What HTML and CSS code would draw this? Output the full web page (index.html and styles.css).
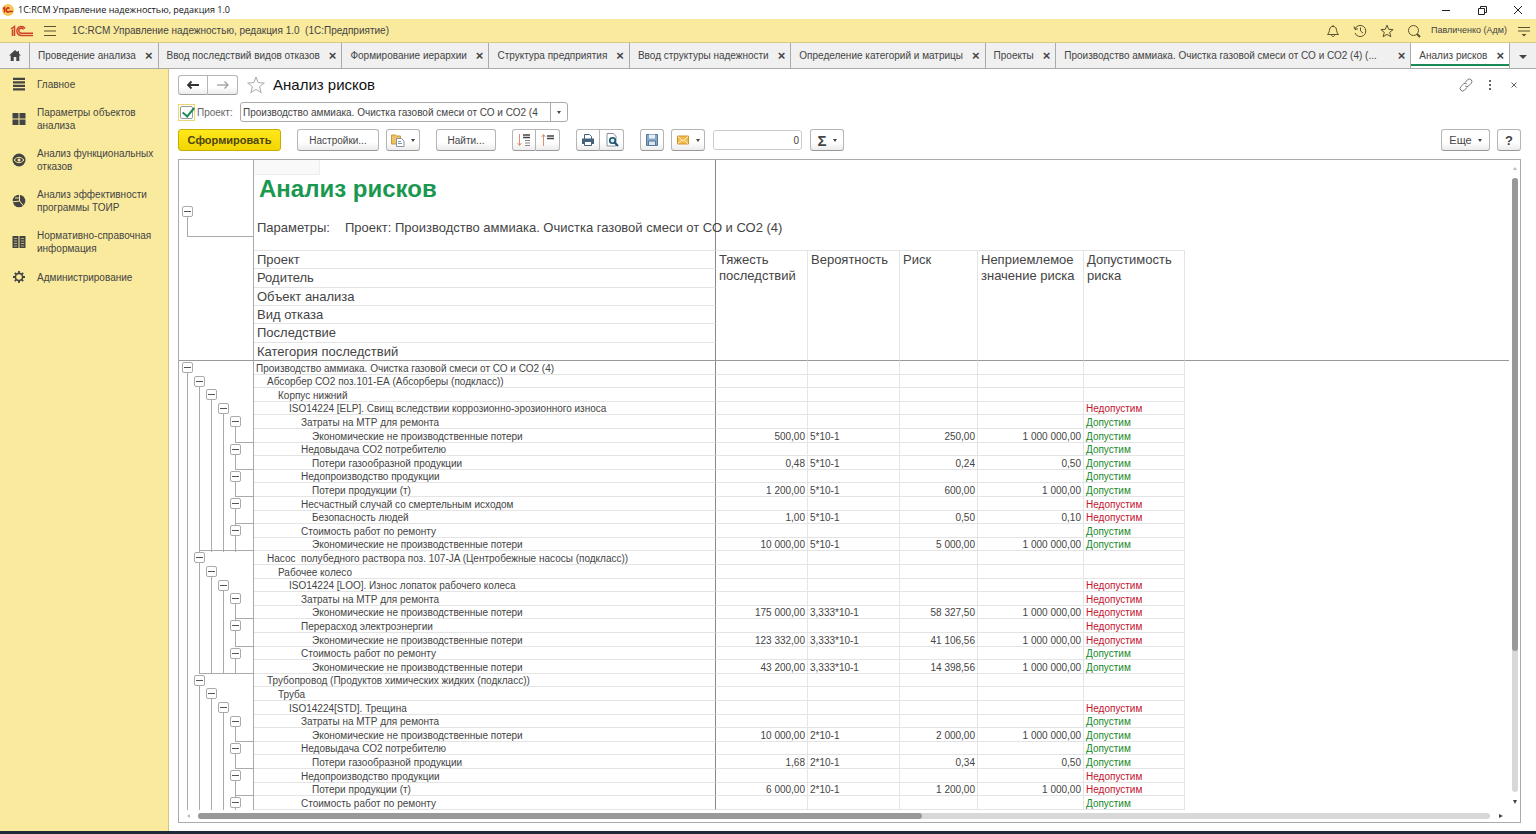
FILE: index.html
```html
<!DOCTYPE html>
<html lang="ru">
<head>
<meta charset="utf-8">
<title>1C:RCM Управление надежностью</title>
<link rel="stylesheet" href="styles.css">
</head>
<body>
<div class="app">
  <header class="titlebar">
    <svg class="app-icon" viewBox="0 0 12 12"><circle cx="6" cy="6" r="6" fill="#f7c95c"/><path d="M1 4.600l1.500-1v5M7.500 4.500a2 2 0 1 0 0 3H11" fill="none" stroke="#d0301c" stroke-width="1.500"/></svg>
    <span class="window-title">1C:RCM Управление надежностью, редакция 1.0</span>
    <div class="window-buttons">
      <button aria-label="Свернуть"><svg viewBox="0 0 12 12"><path d="M2 6.500h8"/></svg></button>
      <button aria-label="Восстановить"><svg viewBox="0 0 12 12"><path d="M2.500 4.500h6v6h-6zM4.500 4.500v-2h6v6h-2"/></svg></button>
      <button aria-label="Закрыть"><svg viewBox="0 0 12 12"><path d="M2 2l8 8M10 2l-8 8"/></svg></button>
    </div>
  </header>

  <div class="brandbar">
    <svg class="logo" viewBox="0 0 24 14"><path d="M1 5l3.500-2.500V12M2.500 5.500V12" /><path d="M15 4.500A4.500 4.500 0 1 0 11.500 11.500H23M13.500 5.500A2.500 2.500 0 1 0 11.500 9.200H23"/></svg>
    <button class="icon-btn" aria-label="Меню"><svg class="burger" viewBox="0 0 12 12"><path d="M0 1.500h12M0 6h12M0 10.500h12"/></svg></button>
    <span class="brand-title">1C:RCM Управление надежностью, редакция 1.0&nbsp; (1С:Предприятие)</span>
    <div class="brand-tools">
      <button class="icon-btn" aria-label="Уведомления"><svg viewBox="0 0 14 14"><path d="M1.500 10.500h11c-2-2-1.500-3-2.200-5.500C9.800 3 8.800 2.500 7 2.500S4.200 3 3.700 5C3 7.500 3.500 8.500 1.500 10.500zM5.500 11c0 2 3 2 3 0M7 2.500V1"/></svg></button>
      <button class="icon-btn" aria-label="История"><svg viewBox="0 0 14 14"><path d="M2 5a5.600 5.600 0 1 1 0 4M1 2.500l1 3 3-.7M7.500 3.500V7l2.500 2"/></svg></button>
      <button class="icon-btn" aria-label="Избранное"><svg viewBox="0 0 14 14"><path d="M7 1.200l1.700 4.100 4.400.3-3.400 2.800 1.100 4.300L7 10.400l-3.800 2.300 1.100-4.300L.9 5.600l4.400-.3z"/></svg></button>
      <button class="icon-btn" aria-label="Поиск"><svg viewBox="0 0 14 14"><circle cx="6.500" cy="6.500" r="5"/><path d="M10 10l3 3" stroke-width="2"/></svg></button>
      <span class="user">Павличенко (Адм)</span>
      <button class="icon-btn" aria-label="Настройки окна"><svg viewBox="0 0 14 14"><path d="M1 3.500h12M1 7h12"/><path d="M4.500 10h5L7 12.500z" fill="#5a5230" stroke="none"/></svg></button>
    </div>
  </div>

  <nav class="tabs">
    <a class="home" href="#" aria-label="Начальная страница"><svg viewBox="0 0 12 11"><path d="M6 0L0 5.500h1.700V11h3V7h2.600v4h3V5.500H12L10 3.700V1H8.500v1.300z" fill="#444"/></svg></a>
    <a class="tab" href="#"><span>Проведение анализа</span><b>×</b></a>
    <a class="tab" href="#"><span>Ввод последствий видов отказов</span><b>×</b></a>
    <a class="tab" href="#"><span>Формирование иерархии</span><b>×</b></a>
    <a class="tab" href="#"><span>Структура предприятия</span><b>×</b></a>
    <a class="tab" href="#"><span>Ввод структуры надежности</span><b>×</b></a>
    <a class="tab" href="#"><span>Определение категорий и матрицы</span><b>×</b></a>
    <a class="tab" href="#"><span>Проекты</span><b>×</b></a>
    <a class="tab wide" href="#"><span>Производство аммиака. Очистка газовой смеси от СО и СО2 (4) (...</span><b>×</b></a>
    <a class="tab active" href="#"><span>Анализ рисков</span><b>×</b></a>
    <button class="more-tabs" aria-label="Все вкладки"><i class="caret"></i></button>
  </nav>

  <div class="body">
    <aside class="sidebar">
      <a href="#"><svg viewBox="0 0 14 14"><path d="M1 1.800h12M1 5.300h12M1 8.800h12M1 12.300h12" stroke="#444" stroke-width="2.200"/></svg><span>Главное</span></a>
      <a href="#"><svg viewBox="0 0 14 14"><path d="M.5 1h6v5.500h-6zM7.500 1h6v5.500h-6zM.5 7.500h6V13h-6zM7.500 7.500h6V13h-6z" fill="#444"/></svg><span>Параметры объектов анализа</span></a>
      <a href="#"><svg viewBox="0 0 14 14"><circle cx="7" cy="7" r="6.500" fill="#444"/><path d="M2 7q5-5.500 10 0q-5 5.500-10 0z" fill="none" stroke="#f9ea9d"/><circle cx="7" cy="7" r="1.500" fill="#f9ea9d"/></svg><span>Анализ функциональных отказов</span></a>
      <a href="#"><svg viewBox="0 0 14 14"><circle cx="7" cy="7" r="6.300" fill="#444"/><path d="M7.500 0v7L0 8M7.500 7l4.500 5.500M3 4h4" stroke="#f9ea9d" fill="none"/></svg><span>Анализ эффективности программы ТОИР</span></a>
      <a href="#"><svg viewBox="0 0 14 14"><path d="M.5 1h6v12h-6zM7.500 1h6v12h-6z" fill="#444"/><path d="M2 3.500h3M2 6h3M2 8.500h3M2 11h3M9 3.500h3M9 6h3M9 8.500h3M9 11h3" stroke="#b5aa72"/></svg><span>Нормативно-справочная информация</span></a>
      <a href="#"><svg viewBox="0 0 14 14"><circle cx="7" cy="7" r="3.600" fill="none" stroke="#444" stroke-width="1.600"/><path d="M7 1v2.200M7 10.800V13M1 7h2.200M10.800 7H13M2.800 2.800l1.500 1.500M9.700 9.700l1.500 1.500M11.200 2.800L9.700 4.300M4.300 9.700l-1.500 1.500" stroke="#444" stroke-width="1.800"/></svg><span>Администрирование</span></a>
    </aside>

    <main class="main">
      <div class="page-head">
        <div class="group nav-group">
          <button class="btn" aria-label="Назад"><svg viewBox="0 0 14 10"><path d="M2 5h11M5.500 1.500L2 5l3.500 3.500" fill="none" stroke="#333" stroke-width="1.800"/></svg></button>
          <button class="btn" aria-label="Вперед"><svg viewBox="0 0 14 10"><path d="M1 5h11M8.500 1.500L12 5 8.500 8.500" fill="none" stroke="#aaa" stroke-width="1.500"/></svg></button>
        </div>
        <button class="icon-btn fav" aria-label="В избранное"><svg viewBox="0 0 18 18"><path d="M9 1l2.200 5.700 6.100.3-4.800 3.800 1.700 5.900L9 13.400l-5.200 3.300 1.700-5.900L.7 7l6.100-.3z" fill="none" stroke="#aaa"/></svg></button>
        <h1>Анализ рисков</h1>
        <div class="page-tools">
          <button class="icon-btn" aria-label="Ссылка"><svg viewBox="0 0 14 14"><path d="M6 4.500l2.500-2.700a2.500 2.500 0 0 1 3.700 3.500L9.500 8a2.400 2.400 0 0 1-3.200.2M8 9.500l-2.500 2.700a2.500 2.500 0 0 1-3.700-3.500L4.500 6a2.400 2.400 0 0 1 3.200-.2" fill="none" stroke="#777"/></svg></button>
          <button class="icon-btn" aria-label="Еще"><svg viewBox="0 0 14 14"><path d="M6 2h2v2H6zM6 6h2v2H6zM6 10h2v2H6z" fill="#666"/></svg></button>
          <button class="icon-btn" aria-label="Закрыть"><svg viewBox="0 0 14 14"><path d="M4.500 4.500l5 5M9.500 4.500l-5 5" stroke="#666"/></svg></button>
        </div>
      </div>

      <div class="filter">
        <span class="check-frame"><input type="checkbox" id="use-project" checked></span>
        <label for="use-project">Проект:</label>
        <div class="combo">
          <input type="text" aria-label="Проект" value="Производство аммиака. Очистка газовой смеси от СО и СО2 (4">
          <button aria-label="Выбрать"><i class="caret"></i></button>
        </div>
      </div>

      <div class="toolbar">
        <button class="btn primary">Сформировать</button>
        <button class="btn settings">Настройки...</button>
        <button class="btn drop" aria-label="Варианты"><svg viewBox="0 0 14 14"><path d="M.5 2h4l1 1h4v8h-9z" fill="#efc26a" stroke="#c99a3f"/><path d="M5.500 5.500h5l2.500 2.500v5.500H5.500z" fill="#fff" stroke="#8594a5"/><path d="M7 8.500h3M7 10.500h4" stroke="#8594a5"/></svg><i class="caret"></i></button>
        <button class="btn find">Найти...</button>
        <div class="group pair">
          <button class="btn" aria-label="Развернуть"><svg viewBox="0 0 14 14"><path d="M2.500 1v11M.5 10l2 2.500 2-2.500" fill="none" stroke="#e58a6c"/><path d="M6 2h7M6 4.500h7" stroke="#444" stroke-width="1.500"/><path d="M8 7.500h5M8 10h5M8 12.500h5" stroke="#888"/></svg></button>
          <button class="btn" aria-label="Свернуть"><svg viewBox="0 0 14 14"><path d="M2.500 13V2M.5 4l2-2.500L4.500 4" fill="none" stroke="#e58a6c"/><path d="M6 3h7M6 5.500h7" stroke="#444" stroke-width="1.500"/></svg></button>
        </div>
        <div class="group pair">
          <button class="btn" aria-label="Печать"><svg viewBox="0 0 14 14"><path d="M3.500 6V1.500h5l2 2V6" fill="#fff" stroke="#45627c"/><path d="M1 5.500h12V11H1z" fill="#45627c"/><path d="M3.500 8.500h7v4h-7z" fill="#fff" stroke="#45627c"/></svg></button>
          <button class="btn" aria-label="Просмотр"><svg viewBox="0 0 14 14"><path d="M2 .5h6.500l2.500 3V13H2z" fill="#fff" stroke="#8594a5"/><circle cx="7.500" cy="7.500" r="2.800" fill="#d8edf3" stroke="#17526b" stroke-width="1.600"/><path d="M9.500 9.500l3.500 3.500" stroke="#17526b" stroke-width="2"/></svg></button>
        </div>
        <button class="btn save" aria-label="Сохранить"><svg viewBox="0 0 14 14"><path d="M1.500 1.500h11v11h-11z" fill="#86a9c8" stroke="#54779a"/><path d="M4 1.500h6v4H4z" fill="#e8f0f7"/><path d="M3.500 8h7v4.500h-7z" fill="#dbe6ef" stroke="#54779a"/></svg></button>
        <button class="btn drop" aria-label="Отправить"><svg viewBox="0 0 14 14"><path d="M1.500 3h11v8h-11z" fill="#f3b94f" stroke="#d3922a"/><path d="M2 3.500l5 4.500 5-4.500M2 10.500l3.500-3M12 10.500l-3.500-3" fill="none" stroke="#fff0c8"/></svg><i class="caret"></i></button>
        <input class="sum" type="text" aria-label="Сумма" value="0">
        <button class="btn drop sigma" aria-label="Функция"><span>Σ</span><i class="caret"></i></button>
        <button class="btn more">Еще<i class="caret"></i></button>
        <button class="btn help">?</button>
      </div>

      <section class="sheet">
        <div class="viewport">
          <table class="report">
            <colgroup><col class="c-tree"><col class="c-name"><col class="c-sev"><col class="c-prob"><col class="c-risk"><col class="c-limit"><col class="c-ok"><col></colgroup>
            <thead>
              <tr class="caption-row">
                <td class="tree"><div class="head-tree"><button class="toggle" aria-label="Свернуть"></button><span></span></div></td>
                <td class="name"><div class="cursor"></div><h2>Анализ рисков</h2><p><span>Параметры:</span><span>Проект: Производство аммиака. Очистка газовой смеси от СО и СО2 (4)</span></p></td>
                <td colspan="6"></td>
              </tr>
              <tr><td class="tree" rowspan="6"></td><th class="name">Проект</th><th rowspan="6">Тяжесть последствий</th><th rowspan="6">Вероятность</th><th rowspan="6">Риск</th><th rowspan="6">Неприемлемое значение риска</th><th rowspan="6">Допустимость риска</th><td class="rest" rowspan="6"></td></tr>
              <tr><th class="name">Родитель</th></tr>
              <tr><th class="name">Объект анализа</th></tr>
              <tr><th class="name">Вид отказа</th></tr>
              <tr><th class="name">Последствие</th></tr>
              <tr><th class="name">Категория последствий</th></tr>
            </thead>
            <tbody id="rows"></tbody>
          </table>
        </div>
        <div class="vscroll"><i class="up"></i><div class="track"><div class="thumb"></div></div><i class="down"></i></div>
        <div class="hscroll"><i class="left"></i><div class="track"><div class="thumb"></div></div><i class="right"></i></div>
      </section>
    </main>
  </div>
  <div class="taskbar"></div>
</div>
<script src="report.js"></script>
</body>
</html>
```
FILE: styles.css
```css
* { box-sizing: border-box; }
body { margin: 0; font: 10px/13px "Liberation Sans", Arial, sans-serif; color: #444; background: #fff; }
button, input { font: inherit; color: inherit; margin: 0; }
button { padding: 0; cursor: pointer; }
a { color: inherit; text-decoration: none; }
svg { display: block; flex: none; }

.app { display: flex; flex-direction: column; height: 100vh; overflow: hidden; }

.titlebar { display: flex; align-items: center; height: 19px; padding: 0 0 0 2px; flex: none; color: #111; font-family: "Open Sans", "Noto Sans", sans-serif; font-size: 9px; }
.app-icon { width: 12px; height: 12px; margin-right: 4px; }
.window-buttons { display: flex; margin-left: auto; }
.window-buttons button { width: 36px; border: 0; background: none; display: flex; justify-content: center; }
.window-buttons svg { width: 12px; height: 12px; fill: none; stroke: #222; }

.brandbar { display: flex; align-items: center; height: 24px; flex: none; padding: 0 5px 0 10px; background: #f9ea9d; border-bottom: 1px solid #d8ca84; }
.logo { width: 24px; height: 14px; margin-right: 10px; fill: none; stroke: #d0432c; stroke-width: 1.5; }
.icon-btn { display: flex; border: 0; background: none; }
.burger { width: 12px; height: 12px; stroke: #5a5230; }
.brand-title { margin-left: 16px; }
.brand-tools { display: flex; align-items: center; gap: 13px; margin-left: auto; }
.brand-tools svg { width: 14px; height: 14px; fill: none; stroke: #5a5230; }
.user { font-size: 9px; margin: 0 -3px; }

.tabs { display: flex; height: 26px; flex: none; background: #f0f0f0; border-bottom: 1px solid #aaa; }
.home { width: 30px; flex: none; display: flex; align-items: center; justify-content: center; border-right: 1px solid #aaa; }
.home svg { width: 12px; height: 11px; }
.tab { flex: 1 0 auto; display: flex; align-items: center; justify-content: space-between; gap: 5px; padding: 0 5px 0 8px; border-right: 1px solid #aaa; white-space: nowrap; }
.tab b { font-size: 13px; }
.tab.wide { flex-grow: 4; }
.tab.active { background: #fff; box-shadow: inset 0 -2px #fff, inset 0 -4px #1c8a56; }
.more-tabs { width: 26px; flex: none; border: 0; background: none; }
.caret { display: inline-block; border: 3px solid transparent; border-top-color: #444; border-bottom: 0; }
.more-tabs .caret { border-width: 4px 4px 0; }

.body { display: flex; flex: 1; min-height: 0; }
.sidebar { width: 169px; flex: none; display: flex; flex-direction: column; gap: 15px; padding: 8px 8px 0 12px; background: #f9ea9d; border-right: 1px solid #d0c48a; }
.sidebar a { display: flex; align-items: center; gap: 11px; }
.sidebar svg { width: 14px; height: 14px; }

.main { flex: 1; min-width: 0; display: flex; flex-direction: column; padding: 6px 15px 8px 9px; }
.page-head { display: flex; align-items: center; height: 20px; }
.group { display: flex; }
.btn { display: flex; align-items: center; justify-content: center; gap: 6px; height: 22px; border: 1px solid #b5b5b5; border-bottom-color: #999; border-radius: 3px; background: linear-gradient(#fff 60%, #ececec); white-space: nowrap; }
.btn svg { width: 14px; height: 14px; }
.group .btn:first-child { border-radius: 3px 0 0 3px; }
.group .btn:last-child { border-radius: 0 3px 3px 0; border-left: 0; }
.nav-group .btn { width: 30px; height: 20px; }
.nav-group svg { height: 10px; }
.fav { margin: 0 8px 0 9px; }
.fav svg { width: 18px; height: 18px; }
h1 { margin: 0; font-size: 15px; line-height: 18px; font-weight: 400; color: #111; }
.page-tools { display: flex; gap: 10px; margin-left: auto; }
.page-tools svg { width: 14px; height: 14px; }

.filter { display: flex; align-items: center; height: 20px; margin-top: 7px; }
.check-frame { display: flex; padding: 1px; border: 1px solid #e8d870; margin-right: 2px; }
.check-frame input { appearance: none; width: 13px; height: 13px; border: 1px solid #999; border-radius: 2px; background: #fff; display: flex; }
.check-frame input:checked::before { content: ""; flex: none; width: 5px; height: 10px; margin: -2px 0 0 4px; border: solid #1c8a56; border-width: 0 2px 2px 0; transform: rotate(40deg); }
.filter label { width: 36px; color: #666; margin-right: 7px; }
.combo { display: flex; width: 328px; height: 20px; border: 1px solid #aaa; border-radius: 3px; }
.combo input { flex: 1; min-width: 0; border: 0; padding: 0 0 0 2px; background: none; }
.combo button { width: 17px; border: 0; border-left: 1px solid #aaa; background: none; display: flex; align-items: center; justify-content: center; }
.combo .caret, .btn .caret { border-width: 3px 2px 0; }

.toolbar { display: flex; align-items: center; height: 22px; margin: 7px 0 8px; }
.primary { width: 103px; margin-right: 16px; font-size: 11px; font-weight: 700; color: #4c4411; background: linear-gradient(#ffe81c, #f2d500); border-color: #c7ae00; }
.settings { width: 82px; margin-right: 7px; }
.drop { width: 34px; }
.find { width: 60px; margin: 0 16px; }
.pair { margin-right: 16px; }
.pair .btn { width: 24px; }
.save { width: 24px; margin-right: 7px; }
.sum { width: 89px; height: 20px; margin: 0 8px; padding: 0 2px; border: 1px solid #ccc; border-radius: 3px; text-align: right; }
.sigma span { font-size: 15px; font-weight: 700; }
.more { width: 49px; margin: 0 7px 0 auto; font-size: 11px; }
.help { width: 24px; font-size: 13px; font-weight: 700; }

.sheet { flex: 1; min-height: 0; display: grid; grid-template: minmax(0, 1fr) 12px / minmax(0, 1fr) 11px; border: 1px solid #aaa; }
.viewport { overflow: hidden; }
.report { width: 100%; table-layout: fixed; border-spacing: 0; }
.c-tree { width: 75px; }
.c-name { width: 462px; }
.c-sev, .c-prob { width: 92px; }
.c-risk { width: 78px; }
.c-limit { width: 106px; }
.c-ok { width: 101px; }
td, th { padding: 0; text-align: left; vertical-align: top; font-weight: 400; white-space: nowrap; }
.tree { border-right: 1px solid #aaa; }
.name { border-right: 1px solid #888; }
.caption-row td { height: 90px; }
.head-tree { margin-left: 3px; padding-top: 46px; }
.head-tree span { display: block; height: 20px; margin-left: 5px; border: solid #aaa; border-width: 0 0 1px 1px; }
.cursor { width: 66px; height: 15px; background: #f9f9f9; border: solid #eee; border-width: 0 1px 1px 0; }
h2 { margin: 0 0 0 5px; font-size: 24px; line-height: 28px; color: #1a9850; }
.caption-row p { display: flex; gap: 15px; margin: 16px 0 0 3px; font-size: 13px; line-height: 18px; width: 0; }
thead th { font-size: 13px; line-height: 16px; padding: 1px 3px 0; border: solid #e4e4e4; border-width: 1px 1px 0 0; white-space: normal; }
thead th.name { height: 18px; padding: 1px 3px 0; border-right-color: #888; }
thead tr:nth-child(3) th, thead tr:nth-child(6) th { height: 19px; }
thead tr:last-child th, thead [rowspan] { border-bottom: 1px solid #999; }

tbody td { height: 13px; line-height: 10px; border-right: 1px solid #e4e4e4; border-bottom: 1px solid #e4e4e4; padding: 2px 2px 0; }
tbody tr:nth-child(5n+1) td, tbody tr:nth-child(5n+3) td, tbody tr:nth-child(5n) td { height: 14px; line-height: 11px; }
tbody td.tree { border-right-color: #aaa; border-bottom: 0; padding: 0 0 0 2px; }
tbody td.name { border-right-color: #888; }
tbody td.rest { border: 0; }
.num { text-align: right; }
.bad { color: #c41230; }
.good { color: #1a8a2a; }
tbody .l2 { padding-left: 13px; }
tbody .l3 { padding-left: 24px; }
tbody .l4 { padding-left: 35px; }
tbody .l5 { padding-left: 47px; }
tbody .l6 { padding-left: 58px; }
.levels { display: flex; height: 13px; }
.levels span { width: 12px; height: 14px; }
.levels .line::before { content: ""; display: block; height: 14px; margin-left: 6px; border-left: 1px solid #aaa; }
.levels .node { padding: 1px 0 0 1px; }
.levels .node::after { content: ""; display: block; height: 2px; margin-left: 5px; border-left: 1px solid #aaa; }
.toggle { display: flex; align-items: center; justify-content: center; width: 11px; height: 11px; border: 1px solid #aaa; border-radius: 2px; background: #fff; }
.toggle::before { content: ""; width: 7px; height: 1px; background: #555; }
tbody td.end5 { background: linear-gradient(#aaa, #aaa) right bottom / 18px 1px no-repeat; }
tbody td.end2 { background: linear-gradient(#aaa, #aaa) right bottom / 54px 1px no-repeat; }

.vscroll { display: flex; flex-direction: column; align-items: center; justify-content: space-between; padding: 7px 0 6px; }
.vscroll .track { flex: 1; width: 6px; margin: 8px 0; border-radius: 3px; background: #d8d8d8; }
.vscroll .thumb { width: 6px; height: 77%; border-radius: 3px; background: #999; }
.hscroll { grid-column: 1 / 3; display: flex; align-items: center; padding: 0 17px 0 8px; }
.hscroll .track { flex: 1; height: 6px; margin: 0 9px 0 8px; border-radius: 3px; background: #d8d8d8; }
.hscroll .thumb { width: 56%; height: 6px; border-radius: 3px; background: #999; }
.up { border: 2px solid transparent; border-bottom: 3px solid #bbb; border-top: 0; }
.down { border: 2px solid transparent; border-top: 4px solid #444; border-bottom: 0; }
.left { border: 2px solid transparent; border-right: 3px solid #bbb; border-left: 0; }
.right { border: 2px solid transparent; border-left: 4px solid #444; border-right: 0; }
.taskbar { height: 3px; flex: none; background: #1d2b38; }
```
FILE: report.js
```js
const ECO = 'Экономические не производственные потери';
const GAS = 'Потери газообразной продукции';
const OUT = 'Потери продукции (т)';
const MTR = 'Затраты на МТР для ремонта';
const JOB = 'Стоимость работ по ремонту';

// [level, name, severity, probability, risk, limit, acceptable]
const data = [
  [1, 'Производство аммиака. Очистка газовой смеси от СО и СО2 (4)'],
  [2, 'Абсорбер СО2 поз.101-ЕА (Абсорберы (подкласс))'],
  [3, 'Корпус нижний'],
  [4, 'ISO14224 [ELP]. Свищ вследствии коррозионно-эрозионного износа', '', '', '', '', 0],
  [5, MTR, '', '', '', '', 1],
  [6, ECO, '500,00', '5*10-1', '250,00', '1 000 000,00', 1],
  [5, 'Недовыдача СО2 потребителю', '', '', '', '', 1],
  [6, GAS, '0,48', '5*10-1', '0,24', '0,50', 1],
  [5, 'Недопроизводство продукции', '', '', '', '', 1],
  [6, OUT, '1 200,00', '5*10-1', '600,00', '1 000,00', 1],
  [5, 'Несчастный случай со смертельным исходом', '', '', '', '', 0],
  [6, 'Безопасность людей', '1,00', '5*10-1', '0,50', '0,10', 0],
  [5, JOB, '', '', '', '', 1],
  [6, ECO, '10 000,00', '5*10-1', '5 000,00', '1 000 000,00', 1],
  [2, 'Насос\u00a0 полубедного раствора поз. 107-JA (Центробежные насосы (подкласс))'],
  [3, 'Рабочее колесо'],
  [4, 'ISO14224 [LOO]. Износ лопаток рабочего колеса', '', '', '', '', 0],
  [5, MTR, '', '', '', '', 0],
  [6, ECO, '175 000,00', '3,333*10-1', '58 327,50', '1 000 000,00', 0],
  [5, 'Перерасход электроэнергии', '', '', '', '', 0],
  [6, ECO, '123 332,00', '3,333*10-1', '41 106,56', '1 000 000,00', 0],
  [5, JOB, '', '', '', '', 1],
  [6, ECO, '43 200,00', '3,333*10-1', '14 398,56', '1 000 000,00', 1],
  [2, 'Трубопровод (Продуктов химических жидких (подкласс))'],
  [3, 'Труба'],
  [4, 'ISO14224[STD]. Трещина', '', '', '', '', 0],
  [5, MTR, '', '', '', '', 1],
  [6, ECO, '10 000,00', '2*10-1', '2 000,00', '1 000 000,00', 1],
  [5, 'Недовыдача СО2 потребителю', '', '', '', '', 1],
  [6, GAS, '1,68', '2*10-1', '0,34', '0,50', 1],
  [5, 'Недопроизводство продукции', '', '', '', '', 0],
  [6, OUT, '6 000,00', '2*10-1', '1 200,00', '1 000,00', 0],
  [5, JOB, '', '', '', '', 1]
];

function levels(level) {
  let html = '';
  for (let i = 1; i <= Math.min(level, 5); i++) {
    html += i === level
      ? '<span class="node"><button class="toggle" aria-label="Свернуть"></button></span>'
      : '<span class="line"></span>';
  }
  return html;
}

document.getElementById('rows').innerHTML = data.map((row, i) => {
  const [level, name, sev = '', prob = '', risk = '', limit = '', ok] = row;
  const next = data[i + 1];
  const end = level === 6 && next ? (next[0] === 2 ? 'end2' : 'end5') : '';
  const verdict = ok === undefined ? '' : ok ? 'Допустим' : 'Недопустим';
  return `<tr><td class="tree ${end}"><div class="levels">${levels(level)}</div></td>` +
    `<td class="name l${level}">${name}</td><td class="num">${sev}</td><td>${prob}</td>` +
    `<td class="num">${risk}</td><td class="num">${limit}</td>` +
    `<td class="${ok ? 'good' : 'bad'}">${verdict}</td><td class="rest"></td></tr>`;
}).join('');
```
